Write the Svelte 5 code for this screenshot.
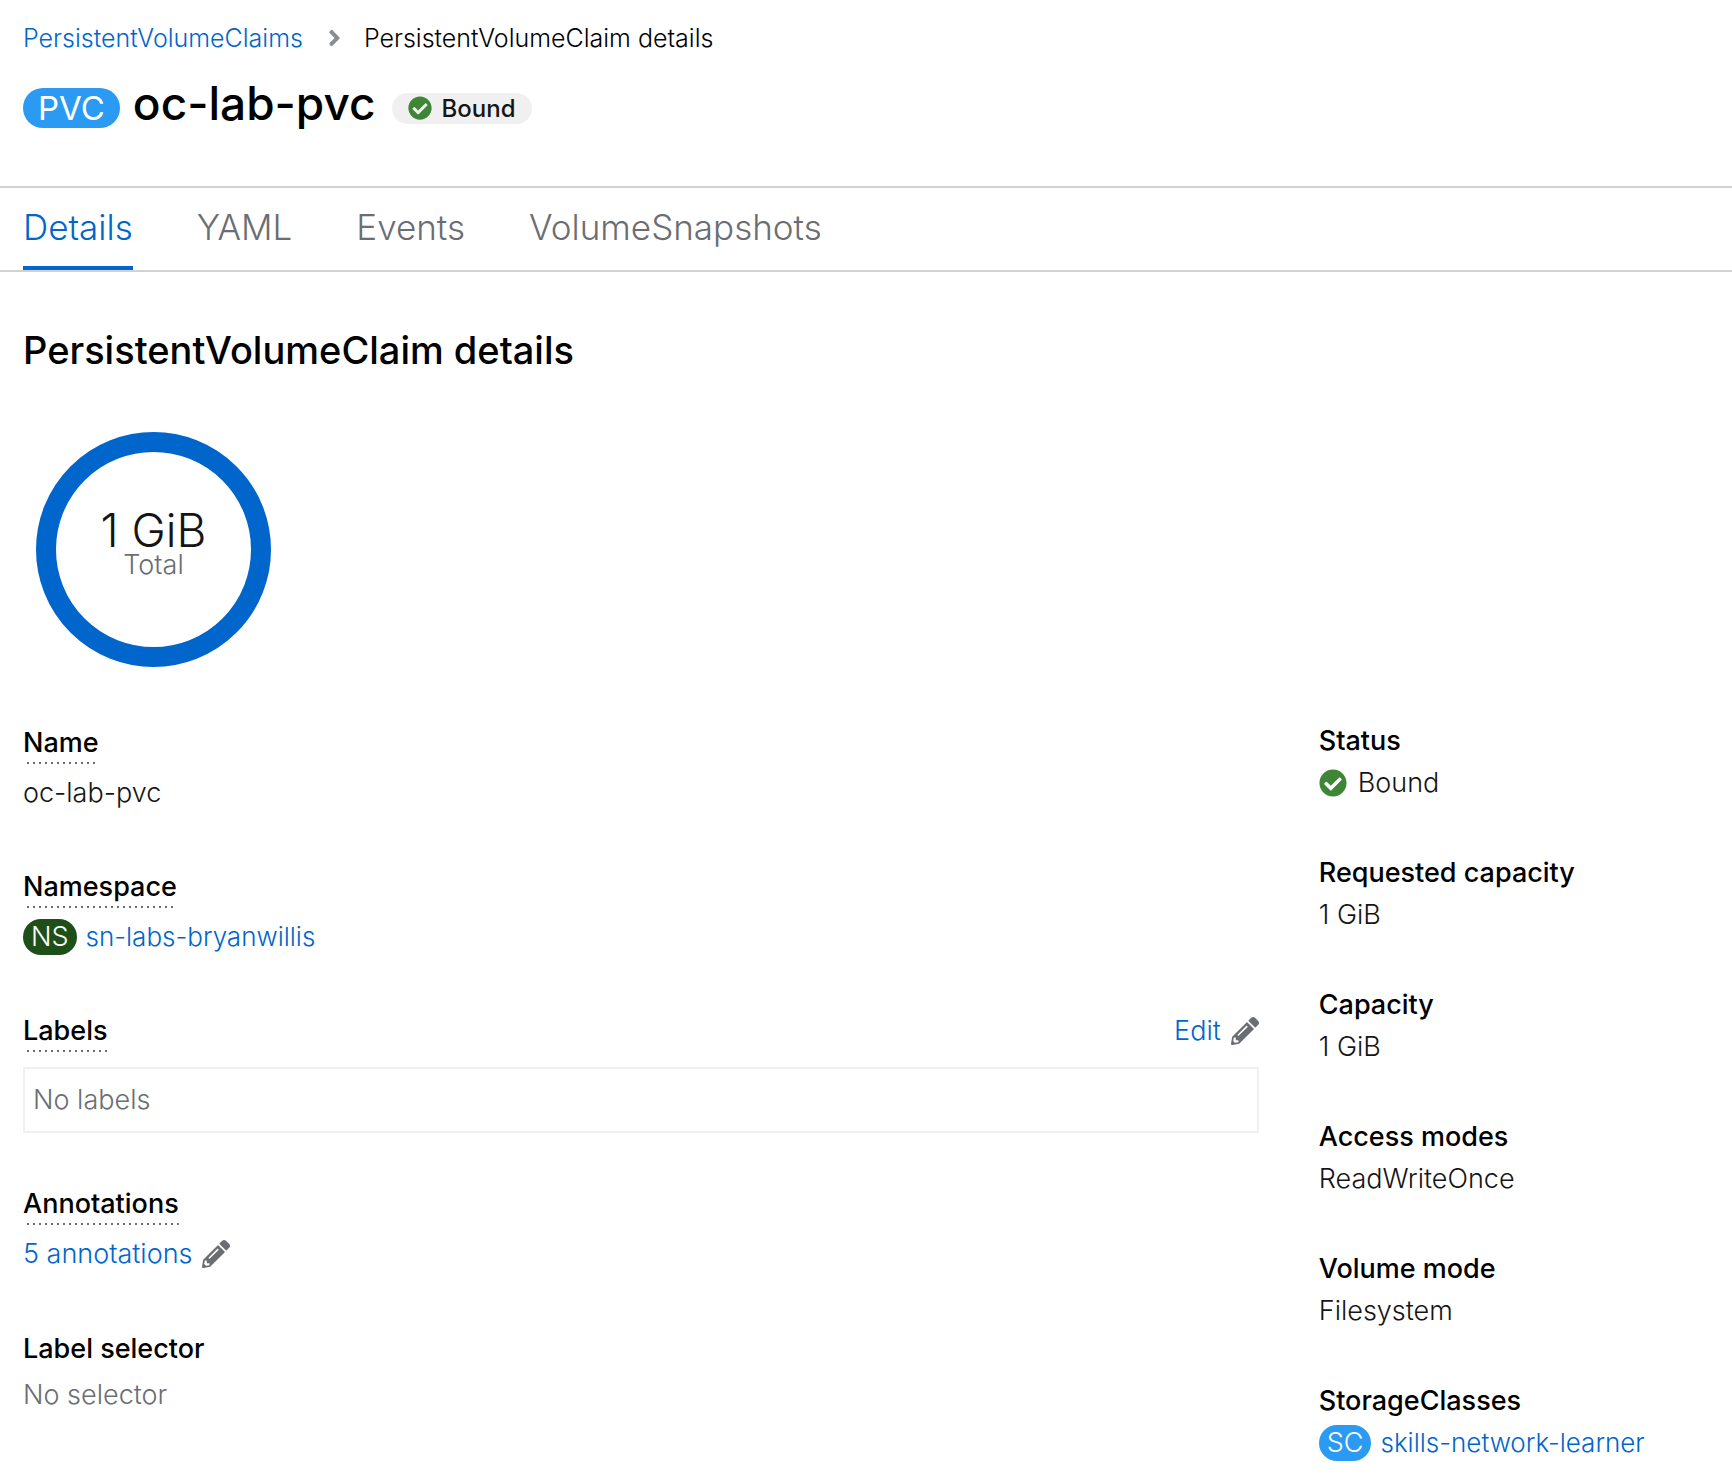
<script lang="ts">
  const tabs = ['Details', 'YAML', 'Events', 'VolumeSnapshots'];
  let active = $state('Details');

  const facts = [
    { term: 'Requested capacity', value: '1 GiB' },
    { term: 'Capacity', value: '1 GiB' },
    { term: 'Access modes', value: 'ReadWriteOnce' },
    { term: 'Volume mode', value: 'Filesystem' },
  ];
</script>

{#snippet check()}
  <svg class="check" viewBox="0 0 512 512" aria-hidden="true">
    <path d="M504 256c0 137-111 248-248 248S8 393 8 256 119 8 256 8s248 111 248 248zM227.300 387.300l184-184c6.200-6.200 6.200-16.400 0-22.600l-22.600-22.600c-6.200-6.200-16.400-6.200-22.600 0L216 308.100l-70.100-70.100c-6.200-6.200-16.400-6.200-22.600 0l-22.600 22.600c-6.200 6.200-6.200 16.400 0 22.600l104 104c6.200 6.200 16.400 6.200 22.600.1z" />
  </svg>
{/snippet}

{#snippet pencil()}
  <svg class="pencil" viewBox="0 0 512 512" aria-hidden="true">
    <path d="M497.900 142.100l-46.100 46.100c-4.700 4.700-12.300 4.700-17 0l-111-111c-4.700-4.700-4.700-12.300 0-17l46.100-46.100c18.700-18.700 49.100-18.700 67.900 0l60.100 60.100c18.800 18.700 18.800 49.100 0 67.900zM284.200 99.800L21.600 362.400.4 483.900c-2.900 16.400 11.400 30.600 27.800 27.800l121.500-21.300 262.600-262.600c4.700-4.700 4.700-12.300 0-17l-111-111c-4.800-4.700-12.400-4.700-17.100 0zM124.100 339.900c-5.500-5.500-5.500-14.300 0-19.800l154-154c5.500-5.500 14.300-5.500 19.800 0s5.500 14.300 0 19.800l-154 154c-5.500 5.500-14.300 5.500-19.800 0zM88 424h48v36.300l-64.500 11.300-31.100-31.100L51.700 376H88v48z" />
  </svg>
{/snippet}

<header>
  <nav class="crumbs" aria-label="Breadcrumb">
    <a href="#claims">PersistentVolumeClaims</a>
    <svg class="chevron" viewBox="0 0 256 512" aria-hidden="true">
      <path d="M224.300 273l-136 136c-9.400 9.400-24.600 9.400-33.900 0l-22.600-22.600c-9.400-9.400-9.400-24.600 0-33.900l96.400-96.400-96.400-96.400c-9.400-9.400-9.400-24.600 0-33.900L54.300 103c9.400-9.400 24.600-9.400 33.900 0l136 136c9.500 9.400 9.500 24.600.1 34z" />
    </svg>
    <span>PersistentVolumeClaim details</span>
  </nav>
  <div class="title">
    <span class="kind large">PVC</span>
    <h1>oc-lab-pvc</h1>
    <span class="status">{@render check()}Bound</span>
  </div>
</header>

<div class="tabs" role="tablist">
  {#each tabs as tab}
    <button role="tab" aria-selected={active === tab} onclick={() => (active = tab)}>{tab}</button>
  {/each}
</div>

<main>
  <h2>PersistentVolumeClaim details</h2>
  <div class="donut">
    <strong>1 GiB</strong>
    <span>Total</span>
  </div>

  <div class="columns">
    <dl class="left">
      <div>
        <dt><button class="hint">Name</button></dt>
        <dd>oc-lab-pvc</dd>
      </div>
      <div>
        <dt><button class="hint">Namespace</button></dt>
        <dd><span class="kind ns">NS</span><a href="#namespace">sn-labs-bryanwillis</a></dd>
      </div>
      <div>
        <dt><button class="hint">Labels</button><button class="edit">Edit{@render pencil()}</button></dt>
        <dd class="box">No labels</dd>
      </div>
      <div>
        <dt><button class="hint">Annotations</button></dt>
        <dd><button class="edit">5 annotations{@render pencil()}</button></dd>
      </div>
      <div>
        <dt class="plain">Label selector</dt>
        <dd class="muted">No selector</dd>
      </div>
    </dl>

    <dl class="right">
      <div>
        <dt>Status</dt>
        <dd class="bound">{@render check()}Bound</dd>
      </div>
      {#each facts as fact}
        <div>
          <dt>{fact.term}</dt>
          <dd>{fact.value}</dd>
        </div>
      {/each}
      <div>
        <dt>StorageClasses</dt>
        <dd><span class="kind">SC</span><a href="#storageclass">skills-network-learner</a></dd>
      </div>
    </dl>
  </div>
</main>

<style>
  :global(body) {
    background: #fff;
    color: #151515;
    font-family: Inter, 'Liberation Sans', sans-serif;
    font-size: 27px;
    font-weight: 300;
    line-height: 42px;
  }
  h1, h2, dl, dd { margin: 0; }
  button {
    padding: 0;
    border: 0;
    background: none;
    color: inherit;
    font: inherit;
    cursor: pointer;
  }
  a { color: #06c; text-decoration: none; }
  a:hover { text-decoration: underline; }
  svg { flex: none; display: block; }

  header { padding: 19px 23px 43px; }
  .crumbs {
    display: flex;
    align-items: center;
    font-size: 25px;
    line-height: 38px;
  }
  .crumbs span { color: #000; }
  .chevron { width: 13px; height: 26px; margin: 0 23px 0 25px; fill: #8a8d90; }
  .title {
    display: flex;
    align-items: center;
    min-height: 70px;
    margin-top: 16px;
  }
  h1 {
    margin: 0 16px 0 13px;
    padding-bottom: 10px;
    color: #000;
    font-size: 46px;
    font-weight: 500;
    line-height: 60px;
  }
  .kind {
    display: inline-block;
    padding: 0 8px;
    border-radius: 20px;
    background: #2b9af3;
    color: #fff;
    font-size: 27px;
    line-height: 36px;
  }
  .kind.large { padding: 0 15px; font-size: 33px; font-weight: 400; line-height: 40px; }
  .kind.ns { background: #1e4f18; }
  .status {
    display: flex;
    align-items: center;
    gap: 10px;
    padding: 0 16px;
    border-radius: 16px;
    background: #f0f0f0;
    font-size: 24px;
    font-weight: 500;
    line-height: 31px;
  }
  .check { width: 28px; height: 28px; fill: #3e8635; }
  .status .check { width: 24px; height: 24px; }
  .pencil { width: 28px; height: 28px; fill: #6a6e73; }

  .tabs {
    display: flex;
    gap: 64px;
    padding: 0 23px;
    border-top: 2px solid #d2d2d2;
    border-bottom: 2px solid #d2d2d2;
  }
  .tabs button {
    padding: 15px 0;
    border-bottom: 4px solid transparent;
    color: #6a6e73;
    font-size: 35px;
    line-height: 48px;
  }
  .tabs button[aria-selected='true'] { border-color: #06c; color: #06c; }

  main { padding: 52px 23px 0; }
  h2 { color: #000; font-size: 38px; font-weight: 500; line-height: 52px; }
  .donut {
    box-sizing: border-box;
    display: flex;
    flex-direction: column;
    align-items: center;
    width: 235px;
    height: 235px;
    margin: 56px 13px 53px;
    padding-top: 54px;
    border: 20px solid #06c;
    border-radius: 50%;
  }
  .donut strong { font-size: 46px; font-weight: 300; line-height: 48px; }
  .donut span { color: #6a6e73; line-height: 22px; }

  .columns {
    display: grid;
    grid-template-columns: minmax(0, 76fr) minmax(0, 24fr);
    gap: 60px;
  }
  dl { display: flex; flex-direction: column; gap: 48px; }
  dt { color: #000; font-weight: 500; }
  dd { display: flex; align-items: center; gap: 9px; }
  dd a { font-size: 26px; }
  .left dt {
    display: flex;
    justify-content: space-between;
    padding: 2px 0 8px;
  }
  .left dt.plain { padding: 3px 0 4px; }
  .left dd { padding-bottom: 2px; }
  .hint {
    background: repeating-linear-gradient(to right, transparent 0 4px, #6a6e73 4px 6px) bottom / 100% 2px no-repeat;
  }
  .edit {
    display: flex;
    align-items: center;
    gap: 10px;
    color: #06c;
    font-weight: 300;
  }
  .left .box {
    margin-top: 7px;
    padding: 10px 8px;
    border: 2px solid #f0f0f0;
    color: #6a6e73;
  }
  .muted { color: #6a6e73; }
  .bound { gap: 11px; }
</style>
